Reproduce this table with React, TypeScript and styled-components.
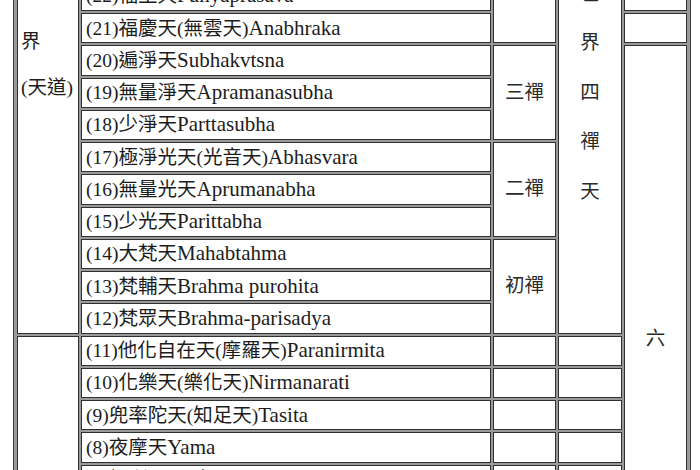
import React from "react";
import styled, { createGlobalStyle } from "styled-components";

const GlobalStyle = createGlobalStyle`
  html, body {
    margin: 0;
    padding: 0;
    background: #ffffff;
    overflow: hidden;
  }
`;

const Page = styled.div`
  width: 700px;
  height: 470px;
  overflow: hidden;
`;

const Table = styled.table`
  box-sizing: border-box;
  width: 678px;
  margin: -23.25px 0 0 13px;
  table-layout: fixed;
  border-collapse: separate;
  border-spacing: 2px;
  padding: 1px;
  border: 1px solid #383838;
  background: #9a9a9a;
  font-family: "Liberation Serif", "Noto Sans CJK TC", serif;
  font-size: 19.5px;
  color: #1c1c1c;
`;

const Col = styled.col<{ $w: number }>`
  width: ${(p) => p.$w}px;
`;

const Row = styled.tr`
  height: 30.25px;
`;

const Cell = styled.td`
  box-sizing: border-box;
  background: #ffffff;
  border: 1px solid #303030;
  padding: 0 4px;
  line-height: 22px;
  vertical-align: middle;
  white-space: nowrap;
  overflow: hidden;
`;

const Latin = styled.span`
  font-size: 21px;
`;

const SideCell = styled(Cell)`
  vertical-align: top;
  padding: 48.25px 2px 0 3px;
  line-height: 23px;
`;

const GroupCell = styled(Cell)`
  text-align: center;
  color: #2a2a2a;
`;

const LabelCell = styled(Cell)`
  text-align: center;
  vertical-align: top;
  padding: 0;
  line-height: 24.75px;
  color: #2a2a2a;
`;

const RealmCell = styled(Cell)`
  text-align: center;
  vertical-align: top;
  padding: 281px 0 0 0;
  line-height: 24px;
  color: #2a2a2a;
`;

type Heaven = { n: number; zh: string; en: string };

const heavens: Heaven[] = [
  { n: 22, zh: "福生天", en: "Punyaprasava" },
  { n: 21, zh: "福慶天(無雲天)", en: "Anabhraka" },
  { n: 20, zh: "遍淨天", en: "Subhakvtsna" },
  { n: 19, zh: "無量淨天", en: "Apramanasubha" },
  { n: 18, zh: "少淨天", en: "Parttasubha" },
  { n: 17, zh: "極淨光天(光音天)", en: "Abhasvara" },
  { n: 16, zh: "無量光天", en: "Aprumanabha" },
  { n: 15, zh: "少光天", en: "Parittabha" },
  { n: 14, zh: "大梵天", en: "Mahabtahma" },
  { n: 13, zh: "梵輔天", en: "Brahma purohita" },
  { n: 12, zh: "梵眾天", en: "Brahma-parisadya" },
  { n: 11, zh: "他化自在天(摩羅天)", en: "Paranirmita" },
  { n: 10, zh: "化樂天(樂化天)", en: "Nirmanarati" },
  { n: 9, zh: "兜率陀天(知足天)", en: "Tasita" },
  { n: 8, zh: "夜摩天", en: "Yama" },
  { n: 7, zh: "忉利天(三十三天)", en: "Trayastrimsa" },
];

const dhyana: Record<number, string> = { 2: "三禪", 5: "二禪", 8: "初禪" };

const Stack: React.FC<{ chars: string[] }> = ({ chars }) => (
  <>
    {chars.map((c, i) => (
      <React.Fragment key={i}>
        {i > 0 && (
          <>
            <br />
            <br />
          </>
        )}
        {c}
      </React.Fragment>
    ))}
  </>
);

export default function App() {
  return (
    <Page>
      <GlobalStyle />
      <Table>
        <colgroup>
          <Col $w={62} />
          <Col $w={410} />
          <Col $w={63} />
          <Col $w={64} />
          <Col $w={63} />
        </colgroup>
        <tbody>
          {heavens.map((h, i) => (
            <Row key={h.n}>
              {i === 0 && (
                <SideCell rowSpan={11}>
                  <Stack chars={["界", "(天道)"]} />
                </SideCell>
              )}
              {i === 11 && <SideCell rowSpan={5} />}
              <Cell>
                ({h.n}){h.zh}
                <Latin>{h.en}</Latin>
              </Cell>
              {i === 0 && <GroupCell rowSpan={2} />}
              {dhyana[i] && <GroupCell rowSpan={3}>{dhyana[i]}</GroupCell>}
              {i >= 11 && <GroupCell />}
              {i === 0 && (
                <LabelCell rowSpan={11}>
                  <Stack chars={["色", "界", "四", "禪", "天"]} />
                </LabelCell>
              )}
              {i >= 11 && <GroupCell />}
              {i < 2 && <GroupCell />}
              {i === 2 && <RealmCell rowSpan={14}>六</RealmCell>}
            </Row>
          ))}
        </tbody>
      </Table>
    </Page>
  );
}
